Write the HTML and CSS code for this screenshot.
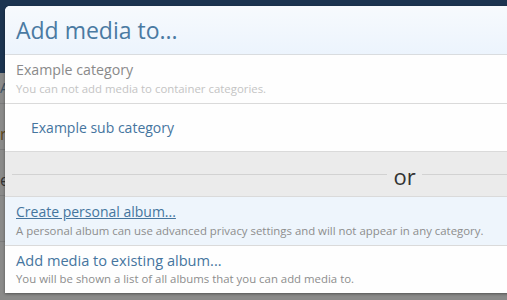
FILE: index.html
```html
<!DOCTYPE html>
<html lang="en">

<head>
    <meta charset="UTF-8">
    <meta name="viewport" content="width=device-width, initial-scale=1.0">
    <title>Add media</title>
    <link rel="stylesheet" href="styles.css">
</head>

<body>

    <div class="page">
        <div class="page-header"></div>
        <div class="page-nav">A</div>
        <div class="page-row brown">r</div>
        <div class="page-row">e</div>
        <div class="page-row"></div>
    </div>

    <div class="overlay">
        <div class="dialog">
            <div class="dialog-title">Add media to...</div>
            <div class="option disabled">
                <div class="option-name">Example category</div>
                <div class="option-desc">You can not add media to container categories.</div>
            </div>
            <div class="option sub">
                <div class="option-name">Example sub category</div>
            </div>
            <div class="divider">
                <span class="line"></span>
                <span class="or">or</span>
                <span class="line"></span>
            </div>
            <div class="option hover">
                <div class="option-name">Create personal album...</div>
                <div class="option-desc">A personal album can use advanced privacy settings and will not appear in any category.</div>
            </div>
            <div class="option last">
                <div class="option-name">Add media to existing album...</div>
                <div class="option-desc">You will be shown a list of all albums that you can add media to.</div>
            </div>
        </div>
    </div>

</body>

</html>
```

FILE: styles.css
```css
body {
    margin: 0;
    background-color: #6f716f;
    font-family: 'Open Sans', 'Noto Sans', sans-serif;
    overflow: hidden;
}

.page {
    height: 300px;
    background-color: #8a8a89;
}

.page .page-header {
    height: 73px;
    background-color: #1c3450;
}

.page .page-nav {
    height: 30px;
    line-height: 30px;
    color: #3c5266;
    font-size: 14px;
    border-bottom: 1px solid #7b7b7b;
}

.page .page-row {
    height: 45px;
    line-height: 60px;
    font-size: 16px;
    color: #333;
    border-bottom: 1px solid #7b7b7b;
}

.page .page-row.brown {
    color: #5c4517;
}

.overlay {
    position: absolute;
    top: 6px;
    left: 5px;
}

.overlay .dialog {
    width: 792px;
    height: 287px;
    background-color: #fefefe;
    border-radius: 5px 5px 0 0;
    box-shadow: 0 1px 3px rgba(0, 0, 0, 0.4);
    overflow: hidden;
}

.overlay .dialog .dialog-title {
    height: 48px;
    line-height: 48px;
    padding-left: 11px;
    font-size: 23px;
    color: #4a7aa2;
    background: linear-gradient(to bottom, #f7fafd, #ecf4fd);
    border-bottom: 1px solid #d9dcdf;
}

.overlay .dialog .option {
    height: 49px;
    padding: 5px 11px 0;
    box-sizing: border-box;
    border-bottom: 1px solid #dadada;
}

.overlay .dialog .option .option-name {
    font-size: 14.2px;
    color: #45759e;
    line-height: 20px;
}

.overlay .dialog .option .option-desc {
    font-size: 11.4px;
    color: #8d8d8d;
    line-height: 18px;
}

.overlay .dialog .option.disabled .option-name {
    color: #8a8a8a;
}

.overlay .dialog .option.disabled .option-desc {
    color: #c4c4c4;
}

.overlay .dialog .option.sub {
    height: 48px;
    padding: 0 0 0 26px;
    display: flex;
    align-items: center;
}

.overlay .dialog .option.sub .option-name {
    font-size: 14px;
}

.overlay .dialog .option.hover {
    background-color: #eef5fc;
}

.overlay .dialog .option.hover .option-name {
    font-size: 14px;
    text-decoration: underline;
}

.overlay .dialog .option.last {
    border-bottom: none;
    padding-top: 4px;
}

.overlay .dialog .option.last .option-name {
    font-size: 14.6px;
}

.overlay .dialog .divider {
    height: 45px;
    box-sizing: border-box;
    display: flex;
    align-items: center;
    gap: 6px;
    padding-left: 7px;
    background-color: #ebebeb;
    border-bottom: 1px solid #dadada;
}

.overlay .dialog .divider .line {
    flex: 1;
    height: 1px;
    background-color: #d2d2d2;
}

.overlay .dialog .divider .or {
    font-size: 22px;
    color: #333;
    line-height: 20px;
    padding-top: 4px;
}
```
